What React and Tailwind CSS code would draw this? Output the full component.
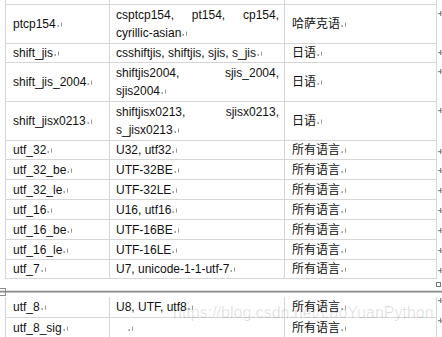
import React from 'react';

// Paragraph mark that Word draws after each cell's text
const Mark = () => (
    <svg width="6" height="5" viewBox="0 0 6 5" className="inline-block ml-[1px]">
        <rect x="0.5" y="3.3" width="1.4" height="1.4" fill="#6e6e6e" />
        <rect x="4" y="0.5" width="1" height="4.2" fill="#999" />
    </svg>
);

// End-of-row marker to the right of the table
const RowEnd = ({ top }) => (
    <svg width="5" height="5" viewBox="0 0 5 5" className="absolute left-[433px]" style={{ top }}>
        <rect x="2" y="0" width="1.2" height="5" fill="#8c8c8c" />
        <rect x="0" y="2" width="5" height="1.2" fill="#8c8c8c" />
    </svg>
);

const topRows = [
    { h: 39, a: 'ptcp154', b: 'csptcp154, pt154, cp154, cyrillic-asian', c: '哈萨克语', m: 6, two: true },
    { h: 19, a: 'shift_jis', b: 'csshiftjis, shiftjis, sjis, s_jis', c: '日语', m: 6 },
    { h: 39, a: 'shift_jis_2004', b: 'shiftjis2004, sjis_2004, sjis2004', c: '日语', m: 6, two: true },
    { h: 39, a: 'shift_jisx0213', b: 'shiftjisx0213, sjisx0213, s_jisx0213', c: '日语', m: 6, two: true },
    { h: 19, a: 'utf_32', b: 'U32, utf32', c: '所有语言', m: 8 },
    { h: 20, a: 'utf_32_be', b: 'UTF-32BE', c: '所有语言', m: 8 },
    { h: 20, a: 'utf_32_le', b: 'UTF-32LE', c: '所有语言', m: 8 },
    { h: 20, a: 'utf_16', b: 'U16, utf16', c: '所有语言', m: 8 },
    { h: 20, a: 'utf_16_be', b: 'UTF-16BE', c: '所有语言', m: 8 },
    { h: 20, a: 'utf_16_le', b: 'UTF-16LE', c: '所有语言', m: 8 },
    { h: 19, a: 'utf_7', b: 'U7, unicode-1-1-utf-7', c: '所有语言', m: 8 },
];

const bottomRows = [
    { h: 21, a: 'utf_8', b: 'U8, UTF, utf8', c: '所有语言', m: 1 },
    { h: 20, a: 'utf_8_sig', b: '', c: '所有语言', m: 0, last: true },
];

const Row = ({ row }) => (
    <div
        className={`relative grid grid-cols-[104px_175px_153px] ${row.last ? '' : 'border-b border-[#d6d6d6]'}`}
        style={{ height: row.h }}
    >
        <div className="flex items-center border-l border-[#d6d6d6] pl-[7px] whitespace-nowrap">
            <span>{row.a}<Mark /></span>
        </div>
        <div
            className={`flex items-center border-l border-[#d6d6d6] pl-[6px] pr-[5px] ${row.two ? 'leading-[18.5px]' : 'whitespace-nowrap'}`}
        >
            <p className="w-full text-justify">
                {row.b ? row.b : <span className="pl-[11px]" />}<Mark />
            </p>
        </div>
        <div className="flex items-center border-l border-r border-[#d6d6d6] pl-[7px]">
            <span>{row.c}<Mark /></span>
        </div>
        <RowEnd top={row.m} />
    </div>
);

export default function App() {
    return (
        <div className="relative w-[442px] h-[337px] overflow-hidden bg-white text-[12px] leading-[18px] text-[#111] font-['Liberation_Sans','Noto_Sans_CJK_SC',sans-serif]">
            <div className="ml-[5px] w-[432px]">
                {/* tail of the row above the visible area */}
                <div className="grid grid-cols-[104px_175px_153px] h-[5px] border-b border-[#d6d6d6]">
                    <div className="border-l border-[#d6d6d6]" />
                    <div className="border-l border-[#d6d6d6]" />
                    <div className="border-l border-r border-[#d6d6d6]" />
                </div>
                {topRows.map((r) => (
                    <Row key={r.a} row={r} />
                ))}
            </div>

            {/* end-of-table marker */}
            <div className="flex justify-end h-[11px] pr-[1px]">
                <div className="mt-[3px] w-[5px] h-[5px] border border-[#7a7a7a]" />
            </div>

            {/* page break line */}
            <div className="relative h-[3px]">
                <div className="h-px bg-[#dedede]" />
                <div className="h-px bg-[#8e8e8e]" />
                <div className="h-px bg-[#c2c2c2]" />
                <div className="absolute left-[-1px] top-[-2px] w-[7px] h-[8px] border border-[#8a8a8a]" />
            </div>

            <div className="ml-[5px] mt-[4px] w-[432px]">
                {bottomRows.map((r) => (
                    <Row key={r.a} row={r} />
                ))}
            </div>

            <div className="absolute left-[173px] top-[305px] text-[16px] leading-none whitespace-nowrap text-[rgba(0,0,0,0.12)] font-['Liberation_Sans',sans-serif]">
                https://blog.csdn.net/LaoYuanPython
            </div>
        </div>
    );
}
